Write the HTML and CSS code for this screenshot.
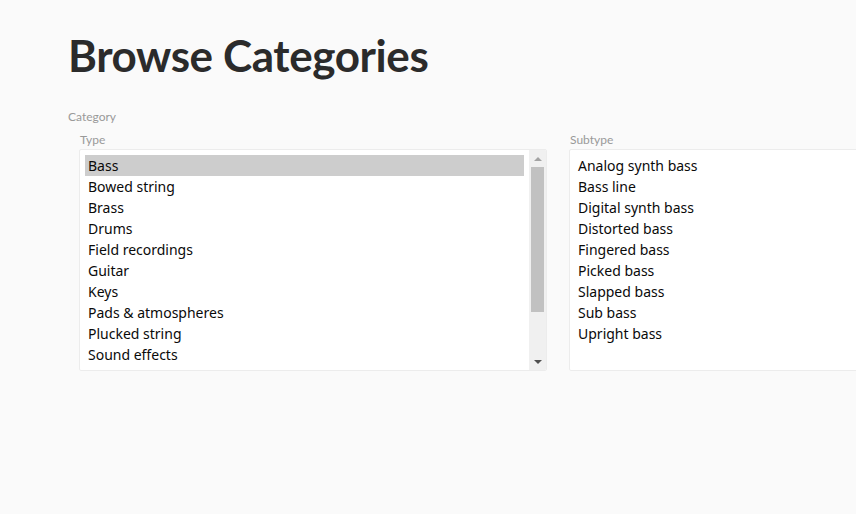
FILE: index.html
```html
<!DOCTYPE html>
<html lang="en">
<head>
<meta charset="utf-8">
<title>Browse Categories</title>
<link rel="stylesheet" href="styles.css">
</head>
<body>
<main class="page">
  <h1 class="title">Browse Categories</h1>
  <section class="category">
    <div class="category-label">Category</div>
    <div class="columns">
      <div class="column">
        <div class="field-label">Type</div>
        <div class="listbox">
          <ul class="list">
            <li class="item selected">Bass</li>
            <li class="item">Bowed string</li>
            <li class="item">Brass</li>
            <li class="item">Drums</li>
            <li class="item">Field recordings</li>
            <li class="item">Guitar</li>
            <li class="item">Keys</li>
            <li class="item">Pads &amp; atmospheres</li>
            <li class="item">Plucked string</li>
            <li class="item">Sound effects</li>
          </ul>
          <div class="scrollbar">
            <div class="arrow arrow-up"></div>
            <div class="track"><div class="thumb"></div></div>
            <div class="arrow arrow-down"></div>
          </div>
        </div>
      </div>
      <div class="column">
        <div class="field-label">Subtype</div>
        <div class="listbox">
          <ul class="list">
            <li class="item">Analog synth bass</li>
            <li class="item">Bass line</li>
            <li class="item">Digital synth bass</li>
            <li class="item">Distorted bass</li>
            <li class="item">Fingered bass</li>
            <li class="item">Picked bass</li>
            <li class="item">Slapped bass</li>
            <li class="item">Sub bass</li>
            <li class="item">Upright bass</li>
          </ul>
        </div>
      </div>
    </div>
  </section>
</main>
</body>
</html>
```
FILE: styles.css
```css
html, body {
  margin: 0;
  padding: 0;
  background: #fafafa;
  overflow: hidden;
}

.page {
  padding: 31px 0 0 68px;
  font-family: Lato, "Noto Sans", sans-serif;
  color: #2b2b2b;
}

.title {
  margin: 0;
  font-family: Lato, sans-serif;
  font-weight: 700;
  font-size: 44px;
  line-height: 48px;
  color: #2b2b2b;
  letter-spacing: -0.4px;
}

.category {
  margin-top: 31px;
}

.category-label {
  font-size: 12px;
  line-height: 14px;
  color: #999;
}

.columns {
  display: flex;
  gap: 22px;
  padding-left: 11px;
  margin-top: 9px;
}

.column {
  flex: 0 0 468px;
  width: 468px;
}

.field-label {
  font-size: 12px;
  line-height: 14px;
  color: #999;
  padding-left: 1px;
  margin-bottom: 2px;
}

.listbox {
  display: flex;
  height: 220px;
  background: #fff;
  border: 1px solid #ececec;
  border-radius: 2px;
  overflow: hidden;
}

.list {
  flex: 1;
  list-style: none;
  margin: 0;
  padding: 5px;
  overflow: hidden;
  font-family: "Noto Sans", "Open Sans", sans-serif;
  font-size: 14px;
  color: #0a0a0a;
}

.item {
  height: 21px;
  line-height: 21px;
  padding-left: 3px;
  white-space: nowrap;
}

.item.selected {
  background: #cdcdcd;
}

.scrollbar {
  flex: 0 0 17px;
  display: flex;
  flex-direction: column;
  background: #f0f0f0;
}

.arrow {
  flex: 0 0 17px;
  display: flex;
  align-items: center;
  justify-content: center;
}

.arrow::before {
  content: "";
  width: 0;
  height: 0;
  border-left: 4px solid transparent;
  border-right: 4px solid transparent;
}

.arrow-up::before {
  border-bottom: 4px solid #a3a3a3;
}

.arrow-down::before {
  border-top: 4px solid #505050;
}

.track {
  flex: 1;
  padding: 0 2px;
}

.thumb {
  height: 145px;
  background: #c1c1c1;
}
```
